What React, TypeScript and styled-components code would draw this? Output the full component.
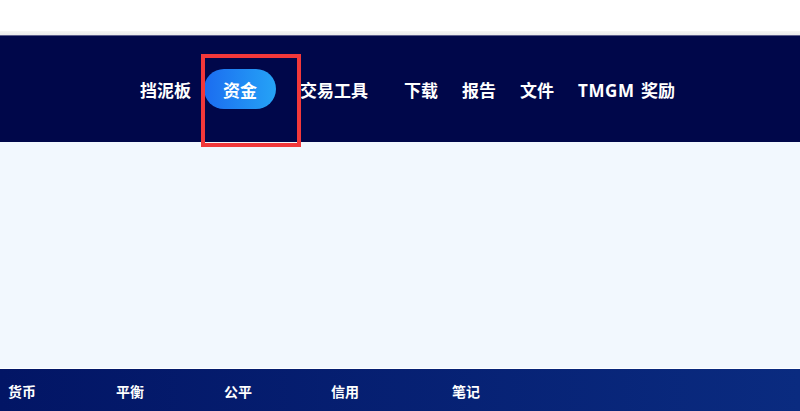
import React from 'react';
import styled, { createGlobalStyle } from 'styled-components';

const GlobalStyle = createGlobalStyle`
  html, body {
    margin: 0;
    padding: 0;
    background: #ffffff;
  }
  body {
    font-family: "Noto Sans", "Noto Sans CJK SC", sans-serif;
  }
`;

const Page = styled.div`
  width: 800px;
  height: 411px;
  overflow: hidden;
  position: relative;
  display: flex;
  flex-direction: column;
`;

const TopBar = styled.div`
  height: 31px;
  background: #ffffff;
`;

const Shadow = styled.div`
  height: 4px;
  background: linear-gradient(#f5f5f5, #ececec);
  border-bottom: 1px solid #5d5f8c;
`;

const Header = styled.header`
  height: 106px;
  background: #00074a;
  display: flex;
  align-items: center;
  padding-left: 128px;
  box-sizing: border-box;
`;

const Nav = styled.nav`
  display: flex;
  align-items: center;
`;

const NavItem = styled.a<{ $active?: boolean; $extra?: number }>`
  display: flex;
  align-items: center;
  justify-content: center;
  height: 40px;
  padding: ${(p) => (p.$active ? '0 19px' : '0 12px')};
  margin: ${(p) => (p.$active ? '0 12px 0 1px' : '0')};
  margin-right: ${(p) => (p.$extra ? `${p.$extra}px` : undefined)};
  border-radius: 20px;
  background: ${(p) =>
    p.$active ? 'linear-gradient(90deg, #1b6cf0 0%, #25a3f6 100%)' : 'transparent'};
  color: #ffffff;
  font-family: "Noto Sans", "Noto Sans CJK SC", sans-serif;
  font-size: 17px;
  font-weight: 700;
  white-space: nowrap;
  text-decoration: none;
  box-sizing: border-box;
`;

const Label = styled.span`
  word-spacing: 2px;
`;

const Latin = styled.span`
  letter-spacing: 0.6px;
`;

const Highlight = styled.div`
  position: absolute;
  left: 201px;
  top: 54px;
  width: 100px;
  height: 93px;
  border: 4px solid #f2383a;
  box-sizing: border-box;
  pointer-events: none;
`;

const Body = styled.main`
  flex: 1;
  background: #f2f8fe;
  border-bottom: 1px solid #ffffff;
`;

const TableHead = styled.div`
  height: 42px;
  background: linear-gradient(90deg, #021565 0%, #0a2b80 100%);
  display: grid;
  grid-template-columns: 108px 108px 107px 121px 1fr;
  align-items: center;
  padding-left: 8px;
  padding-top: 2px;
  box-sizing: border-box;
`;

const HeadCell = styled.div`
  color: #ffffff;
  font-family: "Noto Sans CJK SC", sans-serif;
  font-size: 14px;
  font-weight: 700;
`;

const navItems = [
  { label: '挡泥板' },
  { label: '资金', active: true },
  { label: '交易工具', extra: 12 },
  { label: '下载' },
  { label: '报告' },
  { label: '文件' },
  { label: '奖励', latin: 'TMGM' },
];

const columns = ['货币', '平衡', '公平', '信用', '笔记'];

export default function App() {
  return (
    <>
      <GlobalStyle />
      <Page>
        <TopBar />
        <Shadow />
        <Header>
          <Nav>
            {navItems.map((item) => (
              <NavItem key={item.label} $active={item.active} $extra={item.extra}>
                <Label>
                  {item.latin && <Latin>{item.latin}</Latin>}
                  {item.latin ? ' ' : ''}
                  {item.label}
                </Label>
              </NavItem>
            ))}
          </Nav>
        </Header>
        <Body />
        <TableHead>
          {columns.map((c) => (
            <HeadCell key={c}>{c}</HeadCell>
          ))}
        </TableHead>
        <Highlight />
      </Page>
    </>
  );
}
